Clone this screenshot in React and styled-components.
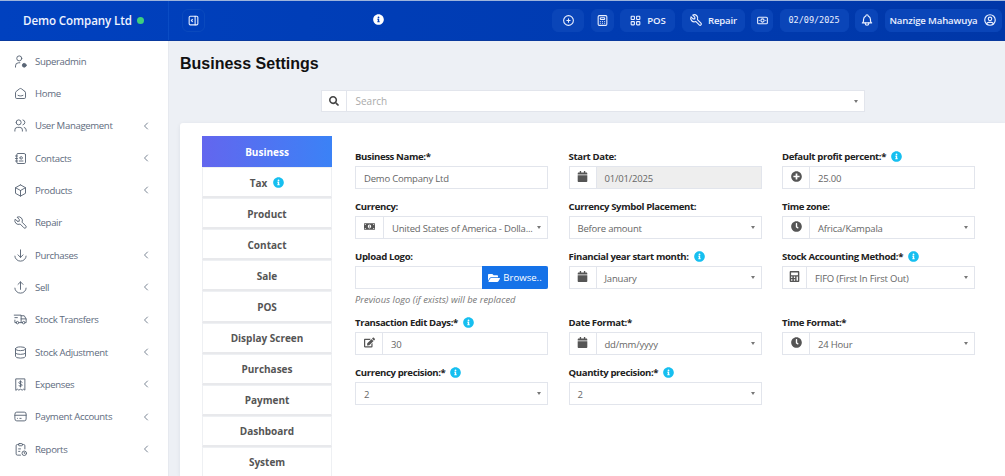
import React from "react";
import styled, { createGlobalStyle } from "styled-components";
import {
  TbSmartHome, TbUsers, TbAddressBook, TbBox, TbTool, TbTruckDelivery, TbDatabase,
  TbCreditCard, TbChevronLeft, TbLayoutSidebarRightExpand, TbCirclePlus,
  TbCalculator, TbLayoutGrid, TbCashBanknote, TbBell, TbUserCircle,
} from "react-icons/tb";
import {
  FaCalendar, FaMoneyBillAlt, FaPlusCircle, FaClock, FaCalculator, FaEdit, FaFolderOpen,
  FaSearch, FaInfoCircle,
} from "react-icons/fa";

const Global = createGlobalStyle`
  html, body { margin: 0; padding: 0; height: 476px; overflow: hidden; background: #edf0f5; }
  * { box-sizing: border-box; }
  body { font-family: "Open Sans", "Noto Sans", sans-serif; }
`;

const Page = styled.div`
  width: 1005px; height: 476px; overflow: hidden; display: flex; flex-direction: column;
  border-top: 1px solid #9db4dc;
`;
const Header = styled.header`
  flex: 0 0 40px; display: flex; align-items: center;
  background: linear-gradient(90deg, #0041bf, #0037a8);
  border-bottom: 1px solid #0a3a9e;
`;
const Brand = styled.div`
  flex: 0 0 169px; height: 100%; display: flex; align-items: center; gap: 5px; padding-left: 23px;
  border-right: 1px solid #0a4cc4; color: #eef3ff; font-size: 11.6px; font-weight: 600;
  letter-spacing: -0.1px; white-space: nowrap;
`;
const Dot = styled.span`
  width: 7px; height: 7px; border-radius: 50%; background: #3ecf7e;
`;
const Bar = styled.div`
  flex: 1; display: flex; align-items: center; padding: 0 3.5px 1px 13px; gap: 6.5px;
`;
const HeadBtn = styled.div`
  height: 23px; flex: 0 0 ${p => p.$w || 22}px;
  display: flex; align-items: center; justify-content: center; gap: 5px;
  border-radius: 6px; background: ${p => p.$ghost ? "transparent" : "#0a45b8"};
  border: 1px solid ${p => p.$ghost ? "#0a49bd" : "#0a45b8"};
  color: #eaf0ff; font-size: 9.6px; font-weight: 600; letter-spacing: -0.15px; white-space: nowrap;
`;
const DateText = styled.span`
  font-family: "DejaVu Sans Mono", monospace; font-size: 8.5px; font-weight: 400; letter-spacing: 0;
`;
const InfoSlot = styled.div`
  flex: 1; display: flex; justify-content: center; color: #fff; font-size: 11px; line-height: 0;
  margin-top: -2px;
`;
const Body = styled.div`
  flex: 1; display: flex; min-height: 0;
`;
const Sidebar = styled.nav`
  flex: 0 0 169px; background: #fff; border-right: 1px solid #e6e9ef; padding-top: 4px;
`;
const NavItem = styled.div`
  height: 32.33px; display: flex; align-items: center; padding-left: 13px; color: #5e6b7e;
  font-size: 9.6px; font-weight: 500; letter-spacing: -0.35px;
`;
const NavIcon = styled.span`
  width: 22px; display: flex; font-size: 15px; color: #5a6575;
  svg { stroke-width: 1.5; }
`;
const NavLabel = styled.span`
  flex: 1; white-space: nowrap;
`;
const NavChevron = styled.span`
  display: flex; margin-right: 16px; font-size: 12px; color: #7a8594;
`;
const Main = styled.main`
  flex: 1; min-width: 0; padding: 0 0 0 11px; display: flex; flex-direction: column;
`;
const Title = styled.h1`
  margin: 12px 0 0; height: 22px; line-height: 22px; font-family: "Liberation Sans", sans-serif;
  font-size: 16px; font-weight: 700; color: #111;
`;
const SearchRow = styled.div`
  margin-top: 15px; display: flex; justify-content: center;
`;
const SearchBox = styled.div`
  width: 544px; height: 22px; display: flex; align-items: stretch; background: #fff;
  border: 1px solid #e2e5ec;
`;
const SearchIcon = styled.span`
  flex: 0 0 25px; display: flex; align-items: center; justify-content: center; font-size: 10px;
  color: #444; border-right: 1px solid #e2e5ec;
`;
const SearchText = styled.span`
  flex: 1; padding-left: 9px; display: flex; align-items: center; font-size: 10px; color: #aaa;
`;
const Caret = styled.span`
  align-self: center; margin: 0 ${p => p.$right || 6}px 0 4px; width: 0; height: 0;
  border-left: 2.5px solid transparent; border-right: 2.5px solid transparent; border-top: 3.5px solid #777;
`;
const Card = styled.section`
  flex: 1; margin-top: 11px; background: #fff; border-radius: 3px 0 0 0; display: flex;
  padding: 13px 0 0 22px; gap: 23px; box-shadow: 0 1px 4px rgba(30,40,70,.08); min-height: 0;
`;
const Tabs = styled.div`
  flex: 0 0 130px; display: flex; flex-direction: column;
`;
const Tab = styled.div`
  flex: 0 0 31.1px; display: flex; align-items: center; justify-content: center; gap: 6px;
  font-size: 10px; font-weight: 700; white-space: nowrap;
  padding-top: ${p => p.$active ? 0 : 1}px;
  color: ${p => p.$active ? "#fff" : "#555"};
  background: ${p => p.$active ? "linear-gradient(90deg, #6366ee, #3b82f6)" : "#fff"};
  border: ${p => p.$active ? "none" : "1px solid #eef0f3"};
  border-bottom: ${p => p.$active ? "none" : "2px solid #e8e9ec"};
`;
const Info = styled.span`
  display: inline-flex; color: #16bff0; font-size: 11px; line-height: 0;
`;
const FormGrid = styled.div`
  display: grid; grid-template-columns: repeat(3, 193px); column-gap: 20.5px; row-gap: 11px;
  align-content: start; margin-top: 14px;
`;
const Group = styled.div`
  min-width: 0;
`;
const Label = styled.div`
  height: 13px; margin-bottom: 3px; display: flex; align-items: center; gap: 5px;
  font-size: 9.6px; font-weight: 700; letter-spacing: -0.37px; color: #222; white-space: nowrap;
`;
const Field = styled.div`
  height: 23px; display: flex; align-items: stretch; background: #fff; border: 1px solid #e2e5ec;
`;
const Addon = styled.span`
  flex: 0 0 ${p => p.$w || 27}px; display: flex; align-items: center; justify-content: center;
  padding-bottom: 2px; font-size: 11px; color: #555; border-right: 1px solid #e2e5ec;
`;
const Value = styled.span`
  flex: 1; min-width: 0; padding: 1px 0 0 ${p => p.$pad || 8}px; display: flex; align-items: center;
  font-size: 9.5px; letter-spacing: -0.2px; color: #666; white-space: nowrap;
  background: ${p => p.$off ? "#eeeeee" : "transparent"};
`;
const BrowseBtn = styled.span`
  flex: 0 0 66px; margin: -1px; display: flex; align-items: center; justify-content: center; gap: 3px;
  background: #1572e8; color: #fff; font-size: 9.6px; border-radius: 0 2px 2px 0;
  svg { font-size: 12px; }
`;
const Help = styled.div`
  height: 15px; margin: 3px 0 -2px; font-size: 9.4px; font-style: italic; color: #777; line-height: 15px; white-space: nowrap;
`;

const ArcArrow = ({ up }) => (
  <svg width="15" height="15" viewBox="0 0 24 24" fill="none" stroke="currentColor" strokeWidth="1.5" strokeLinecap="round" strokeLinejoin="round">
    <path d="M3 13a9 8 0 0 0 18 0" />
    {up ? <path d="M12 15V3M8 7l4-4 4 4" /> : <path d="M12 3v12M8 11l4 4 4-4" />}
  </svg>
);
const AdminIcon = () => (
  <svg width="15" height="15" viewBox="0 0 24 24" fill="none" stroke="currentColor" strokeWidth="1.5" strokeLinecap="round">
    <circle cx="10" cy="7" r="4" />
    <path d="M4 21v-2a5 5 0 0 1 5-5h2" />
    <circle cx="18" cy="18" r="3" fill="currentColor" />
  </svg>
);
const ExpenseIcon = () => (
  <svg width="15" height="15" viewBox="0 0 24 24" fill="none" stroke="currentColor" strokeWidth="1.5" strokeLinecap="round" strokeLinejoin="round">
    <path d="M5 3h14v18l-2-1.5-2.3 1.5-2.7-1.5-2.7 1.5L7 19.5 5 21z" />
    <path d="M14.5 8.5c-.5-1-1.4-1.3-2.5-1.3-1.4 0-2.5.7-2.5 1.9 0 2.7 5 1.2 5 3.8 0 1.2-1.1 1.9-2.5 1.9-1.2 0-2.1-.4-2.6-1.4M12 6v10" />
  </svg>
);
const ReportIcon = () => (
  <svg width="15" height="15" viewBox="0 0 24 24" fill="none" stroke="currentColor" strokeWidth="1.5" strokeLinecap="round" strokeLinejoin="round">
    <path d="M9 4H7a2 2 0 0 0-2 2v13a2 2 0 0 0 2 2h5M15 4h2a2 2 0 0 1 2 2v5" />
    <rect x="9" y="2.5" width="6" height="3.5" rx="1" />
    <path d="M9 11h3M9 15h2" />
    <circle cx="18" cy="18" r="3.6" />
    <path d="M18 16.5V18l1 .8" />
  </svg>
);

const nav = [
  ["Superadmin", <AdminIcon />, false],
  ["Home", <TbSmartHome />, false],
  ["User Management", <TbUsers />, true],
  ["Contacts", <TbAddressBook />, true],
  ["Products", <TbBox />, true],
  ["Repair", <TbTool />, false],
  ["Purchases", <ArcArrow />, true],
  ["Sell", <ArcArrow up />, true],
  ["Stock Transfers", <TbTruckDelivery />, true],
  ["Stock Adjustment", <TbDatabase />, true],
  ["Expenses", <ExpenseIcon />, true],
  ["Payment Accounts", <TbCreditCard />, true],
  ["Reports", <ReportIcon />, true],
];
const tabs = ["Business", "Tax", "Product", "Contact", "Sale", "POS", "Display Screen", "Purchases", "Payment", "Dashboard", "System"];

const Tip = () => <Info><FaInfoCircle /></Info>;

const FormField = ({ label, tip, icon, w, value, select, off, pad }) => (
  <Group>
    <Label>{label}{tip && <Tip />}</Label>
    <Field>
      {icon && <Addon $w={w}>{icon}</Addon>}
      <Value $off={off} $pad={pad}>{value}</Value>
      {select && <Caret />}
    </Field>
  </Group>
);

export default function App() {
  return (
    <Page>
      <Global />
      <Header>
        <Brand>Demo Company Ltd<Dot /></Brand>
        <Bar>
          <HeadBtn $ghost $w={23}><TbLayoutSidebarRightExpand size={13} /></HeadBtn>
          <InfoSlot><FaInfoCircle /></InfoSlot>
          <HeadBtn $w={32}><TbCirclePlus size={13} /></HeadBtn>
          <HeadBtn $w={23}><TbCalculator size={13} /></HeadBtn>
          <HeadBtn $w={55}><TbLayoutGrid size={13} />POS</HeadBtn>
          <HeadBtn $w={63}><TbTool size={14} />Repair</HeadBtn>
          <HeadBtn $w={22}><TbCashBanknote size={13} /></HeadBtn>
          <HeadBtn $w={69}><DateText>02/09/2025</DateText></HeadBtn>
          <HeadBtn $w={23}><TbBell size={14} /></HeadBtn>
          <HeadBtn $w={117}>Nanzige Mahawuya<TbUserCircle size={14} /></HeadBtn>
        </Bar>
      </Header>
      <Body>
        <Sidebar>
          {nav.map(([label, icon, more]) => (
            <NavItem key={label}>
              <NavIcon>{icon}</NavIcon>
              <NavLabel>{label}</NavLabel>
              {more && <NavChevron><TbChevronLeft /></NavChevron>}
            </NavItem>
          ))}
        </Sidebar>
        <Main>
          <Title>Business Settings</Title>
          <SearchRow>
            <SearchBox>
              <SearchIcon><FaSearch /></SearchIcon>
              <SearchText>Search</SearchText>
              <Caret />
            </SearchBox>
          </SearchRow>
          <Card>
            <Tabs>
              {tabs.map((t, i) => (
                <Tab key={t} $active={i === 0}>{t}{t === "Tax" && <Tip />}</Tab>
              ))}
            </Tabs>
            <FormGrid>
              <FormField label="Business Name:*" value="Demo Company Ltd" />
              <FormField label="Start Date:" icon={<FaCalendar />} value="01/01/2025" off />
              <FormField label="Default profit percent:*" tip icon={<FaPlusCircle />} value="25.00" />

              <FormField label="Currency:" icon={<FaMoneyBillAlt />} w={28} value="United States of America - Dolla..." select />
              <FormField label="Currency Symbol Placement:" value="Before amount" select />
              <FormField label="Time zone:" icon={<FaClock />} value="Africa/Kampala" select />

              <Group>
                <Label>Upload Logo:</Label>
                <Field>
                  <Value />
                  <BrowseBtn><FaFolderOpen />Browse..</BrowseBtn>
                </Field>
                <Help>Previous logo (if exists) will be replaced</Help>
              </Group>
              <FormField label="Financial year start month:" tip icon={<FaCalendar />} value="January" select />
              <FormField label="Stock Accounting Method:*" tip icon={<FaCalculator />} w={24} value="FIFO (First In First Out)" select />

              <FormField label="Transaction Edit Days:*" tip icon={<FaEdit />} value="30" />
              <FormField label="Date Format:*" icon={<FaCalendar />} value="dd/mm/yyyy" select />
              <FormField label="Time Format:*" icon={<FaClock />} value="24 Hour" select />

              <FormField label="Currency precision:*" tip value="2" select />
              <FormField label="Quantity precision:*" tip value="2" select />
            </FormGrid>
          </Card>
        </Main>
      </Body>
    </Page>
  );
}
